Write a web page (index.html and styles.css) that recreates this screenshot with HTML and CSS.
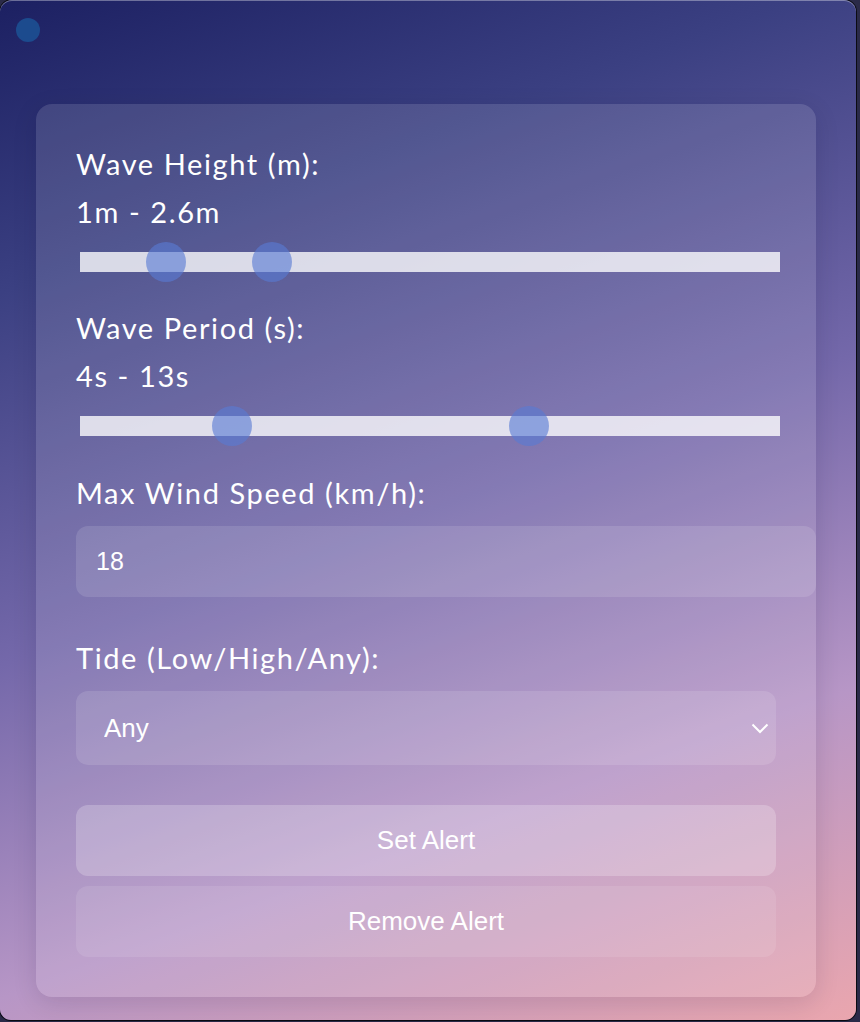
FILE: index.html
```html
<!DOCTYPE html>
<html lang="en">
<head>
<meta charset="utf-8">
<title>Surf Alert</title>
<link rel="stylesheet" href="styles.css">
</head>
<body>
<div class="window">
  <span class="status-dot"></span>
  <div class="card">
    <div class="label">Wave Height (m):</div>
    <div class="value">1m - 2.6m</div>
    <div class="slider">
      <span class="thumb" style="left: 66px"></span>
      <span class="thumb" style="left: 171.6px"></span>
    </div>

    <div class="label label-gap">Wave Period (s):</div>
    <div class="value">4s - 13s</div>
    <div class="slider">
      <span class="thumb" style="left: 132px"></span>
      <span class="thumb" style="left: 429px"></span>
    </div>

    <div class="label label-gap-wind label-field">Max Wind Speed (km/h):</div>
    <input class="text-input" type="text" value="18">

    <div class="label label-gap2 label-field">Tide (Low/High/Any):</div>
    <div class="select-wrap">
      <select class="select">
        <option>Any</option>
        <option>Low</option>
        <option>High</option>
      </select>
      <svg class="chevron" width="18" height="11" viewBox="0 0 18 11"><path d="M1.5 1.5 L9 9 L16.5 1.5" fill="none" stroke="#fff" stroke-width="2"/></svg>
    </div>

    <div class="actions">
      <button class="btn btn-primary">Set Alert</button>
      <button class="btn btn-secondary">Remove Alert</button>
    </div>
  </div>
</div>
</body>
</html>
```

FILE: styles.css
```css
html, body {
  margin: 0;
  padding: 0;
}
body {
  width: 860px;
  height: 1022px;
  background: #2a2a48;
  overflow: hidden;
}
.window {
  position: relative;
  box-sizing: border-box;
  width: 856px;
  height: 1020px;
  padding: 104px 40px 0 36px;
  border-radius: 12px 12px 11px 11px;
  background: linear-gradient(160deg, #1c2062 0%, #3b4082 22%, #7468aa 50%, #b796c6 75%, #eaa6ae 100%);
  box-shadow: 0 0 0 1px #0b0b12, inset 0 1px 0 rgba(255,255,255,0.35);
  font-family: Lato, "Open Sans", sans-serif;
  color: #fff;
}
.status-dot {
  position: absolute;
  left: 16px;
  top: 18px;
  width: 24px;
  height: 24px;
  border-radius: 50%;
  background: #1c4b8e;
}
.card {
  box-sizing: border-box;
  width: 780px;
  padding: 43px 40px 40px 40px;
  border-radius: 16px;
  background: rgba(255,255,255,0.12);
  box-shadow: 0 6px 24px rgba(20,10,40,0.12);
}
.label, .value {
  font-size: 29px;
  line-height: 34px;
  letter-spacing: 1.6px;
  white-space: nowrap;
}
.label {
  margin-bottom: 14px;
}
.label-field {
  margin-bottom: 16px;
}
.label-gap {
  margin-top: 39px;
}
.label-gap-wind {
  margin-top: 40px;
}
.label-gap2 {
  margin-top: 44px;
}
.value {
  margin-bottom: 23px;
}
.slider {
  position: relative;
  width: 700px;
  height: 20px;
  margin-left: 4px;
  background: rgba(255,255,255,0.78);
}
.thumb {
  position: absolute;
  top: -10px;
  width: 40px;
  height: 40px;
  border-radius: 50%;
  background: rgba(88,122,212,0.62);
}
.text-input {
  display: block;
  width: 100%;
  height: 31px;
  padding: 20px;
  margin: 0;
  border: none;
  border-radius: 12px;
  background: rgba(255,255,255,0.12);
  color: #fff;
  font-family: "Liberation Sans", Arial, sans-serif;
  font-size: 25px;
  outline: none;
}
.select-wrap {
  position: relative;
}
.select {
  display: block;
  box-sizing: border-box;
  width: 100%;
  height: 74px;
  margin: 0;
  padding: 0 28px;
  border: none;
  border-radius: 12px;
  background: rgba(255,255,255,0.12);
  color: #fff;
  font-family: "Liberation Sans", Arial, sans-serif;
  font-size: 26px;
  -webkit-appearance: none;
  appearance: none;
  outline: none;
}
.chevron {
  position: absolute;
  right: 7px;
  top: 32px;
}
.actions {
  display: flex;
  flex-direction: column;
  gap: 10px;
  margin-top: 40px;
}
.btn {
  height: 71px;
  border: none;
  border-radius: 12px;
  color: #fff;
  font-family: "Liberation Sans", Arial, sans-serif;
  font-size: 26px;
  cursor: pointer;
}
.btn-primary {
  background: rgba(255,255,255,0.22);
}
.btn-secondary {
  background: rgba(255,255,255,0.1);
}
```
